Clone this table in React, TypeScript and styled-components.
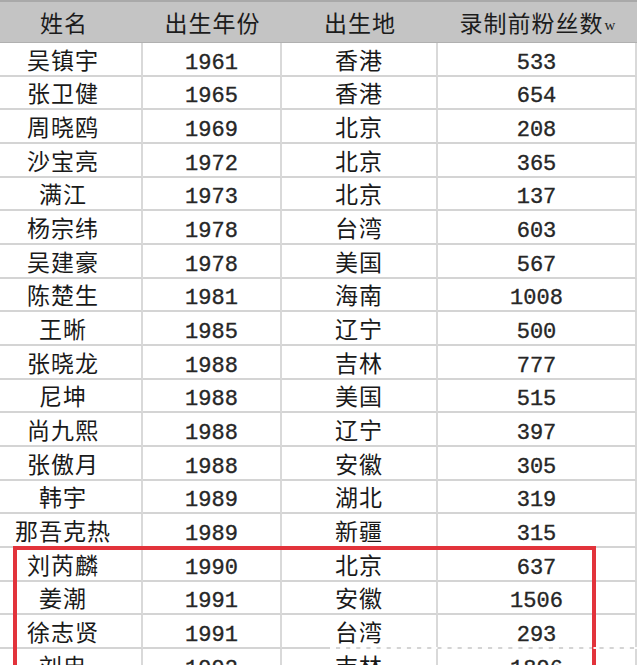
import React from 'react';
import styled, { createGlobalStyle } from 'styled-components';

const GlobalStyle = createGlobalStyle`
  html, body {
    margin: 0;
    padding: 0;
    background: #ffffff;
    overflow: hidden;
  }
`;

const cjk = `"Noto Sans CJK SC", "Noto Sans", sans-serif`;
const mono = `"Liberation Mono", "DejaVu Sans Mono", monospace`;

const Sheet = styled.div`
  position: relative;
  width: 640px;
  height: 665px;
  overflow: hidden;
  background: #fff;
`;

const Grid = styled.div`
  display: grid;
  grid-template-columns: 143px 139px 156px 199px;
  grid-template-rows: 41px;
  grid-auto-rows: 33.67px;
  width: 637px;
  border-top: 2px solid #a9a9a9;
`;

const HeadCell = styled.div<{ $pad?: number }>`
  display: flex;
  align-items: center;
  justify-content: center;
  padding-right: ${(p) => p.$pad ?? 0}px;
  background-color: #c4c4c4;
  border-bottom: 1px solid #b0b0b0;
  font-family: ${cjk};
  font-size: 23px;
  letter-spacing: 1px;
  color: #1c1c1c;
  box-sizing: border-box;

  small {
    font-family: "Liberation Serif", serif;
    font-size: 15px;
    letter-spacing: 0;
    margin-left: 1px;
    margin-top: 6px;
  }
`;

const Cell = styled.div<{ $num?: boolean; $pad?: number }>`
  display: flex;
  align-items: center;
  justify-content: center;
  box-sizing: border-box;
  padding-right: ${(p) => p.$pad ?? 0}px;
  padding-top: ${(p) => (p.$num ? 9 : 0)}px;
  border-right: 2px solid #d9d9d9;
  border-bottom: 2px solid #d4d4d4;
  font-family: ${(p) => (p.$num ? mono : cjk)};
  font-size: ${(p) => (p.$num ? 22 : 23)}px;
  letter-spacing: ${(p) => (p.$num ? 0 : 1)}px;
  color: ${(p) => (p.$num ? '#262626' : '#1a1a1a')};
  -webkit-text-stroke: ${(p) => (p.$num ? '0.35px #262626' : '0')};
`;

const Highlight = styled.div`
  position: absolute;
  left: 13px;
  top: 546px;
  width: 583px;
  height: 200px;
  border: 4px solid #e2333b;
  box-sizing: border-box;
  pointer-events: none;
`;

const Watermark = styled.div`
  position: absolute;
  left: 330px;
  top: 647px;
  width: 310px;
  height: 0;
  border-top: 2px dashed rgba(255, 255, 255, 0.95);
`;

const rows: [string, string, string, string][] = [
  ['吴镇宇', '1961', '香港', '533'],
  ['张卫健', '1965', '香港', '654'],
  ['周晓鸥', '1969', '北京', '208'],
  ['沙宝亮', '1972', '北京', '365'],
  ['满江', '1973', '北京', '137'],
  ['杨宗纬', '1978', '台湾', '603'],
  ['吴建豪', '1978', '美国', '567'],
  ['陈楚生', '1981', '海南', '1008'],
  ['王晰', '1985', '辽宁', '500'],
  ['张晓龙', '1988', '吉林', '777'],
  ['尼坤', '1988', '美国', '515'],
  ['尚九熙', '1988', '辽宁', '397'],
  ['张傲月', '1988', '安徽', '305'],
  ['韩宇', '1989', '湖北', '319'],
  ['那吾克热', '1989', '新疆', '315'],
  ['刘芮麟', '1990', '北京', '637'],
  ['姜潮', '1991', '安徽', '1506'],
  ['徐志贤', '1991', '台湾', '293'],
  ['刘忠', '1992', '吉林', '1896'],
];

const App: React.FC = () => {
  return (
    <Sheet>
      <GlobalStyle />
      <Grid>
        <HeadCell $pad={15}>姓名</HeadCell>
        <HeadCell>出生年份</HeadCell>
        <HeadCell>出生地</HeadCell>
        <HeadCell>
          录制前粉丝数<small>w</small>
        </HeadCell>
        {rows.map(([name, year, place, fans]) => (
          <React.Fragment key={name}>
            <Cell $pad={15}>{name}</Cell>
            <Cell $num>{year}</Cell>
            <Cell>{place}</Cell>
            <Cell $num>{fans}</Cell>
          </React.Fragment>
        ))}
      </Grid>
      <Highlight />
      <Watermark />
    </Sheet>
  );
};

export default App;
